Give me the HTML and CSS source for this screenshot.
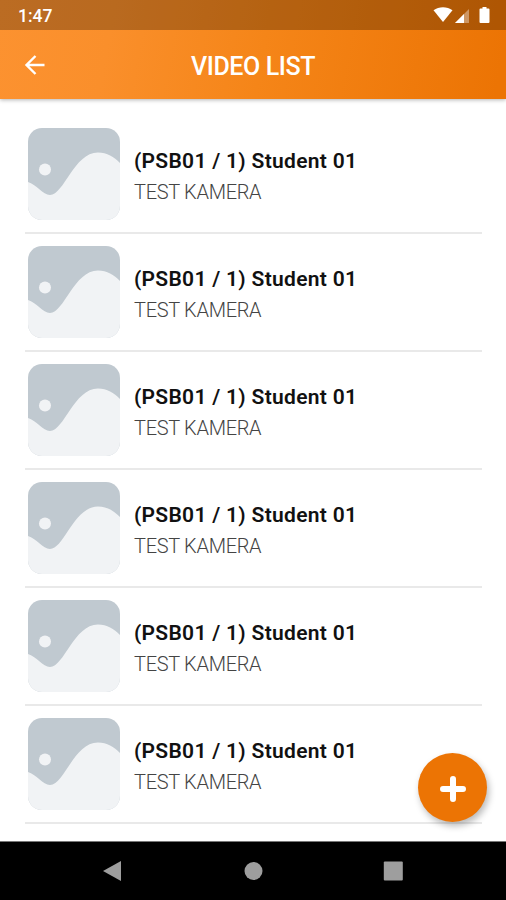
FILE: index.html
```html
<!DOCTYPE html>
<html lang="en">
<head>
<meta charset="utf-8">
<title>Video List</title>
<link rel="stylesheet" href="styles.css">
</head>
<body>
<svg class="defs" width="0" height="0" aria-hidden="true">
  <symbol id="photo" viewBox="0 0 92 92">
    <rect width="92" height="92" fill="#c0c9d0"/>
    <circle cx="17" cy="41.5" r="6" fill="#f1f3f5"/>
    <path d="M0 54C8 56 15 67 22 67C36 67 46 24.500 70 24.500C79 24.500 86 29 92 35V92H0Z" fill="#f1f3f5"/>
  </symbol>
</svg>
<div class="screen">
  <header class="top">
    <div class="status">
      <span class="time">1:47</span>
      <svg class="indicators" width="58" height="20" viewBox="0 0 58 20" fill="#fff">
        <path d="M.5 3.2C6 -.8 14 -.8 19.500 3.200L10 15Z"/>
        <path d="M36 2V16H22Z" opacity=".38"/>
        <path d="M31 7V16H22Z"/>
        <path d="M47.500 1.500H49.500V0H53.500V1.500H55.500Q56.500 1.500 56.500 2.500V15Q56.500 16 55.500 16H47.500Q46.500 16 46.500 15V2.500Q46.500 1.500 47.500 1.500Z"/>
      </svg>
    </div>
    <div class="appbar">
      <svg class="back" width="22" height="22" viewBox="0 0 22 22" fill="none" stroke="#fff" stroke-width="2.400"><path d="M20.500 11H3M11.500 2L2.500 11L11.500 20"/></svg>
      <h1 class="heading">VIDEO LIST</h1>
    </div>
  </header>
  <main class="list">
    <article class="row"><svg class="thumb"><use href="#photo"/></svg><div><h2 class="name">(PSB01 / 1) Student 01</h2><p class="sub">TEST KAMERA</p></div></article>
    <article class="row"><svg class="thumb"><use href="#photo"/></svg><div><h2 class="name">(PSB01 / 1) Student 01</h2><p class="sub">TEST KAMERA</p></div></article>
    <article class="row"><svg class="thumb"><use href="#photo"/></svg><div><h2 class="name">(PSB01 / 1) Student 01</h2><p class="sub">TEST KAMERA</p></div></article>
    <article class="row"><svg class="thumb"><use href="#photo"/></svg><div><h2 class="name">(PSB01 / 1) Student 01</h2><p class="sub">TEST KAMERA</p></div></article>
    <article class="row"><svg class="thumb"><use href="#photo"/></svg><div><h2 class="name">(PSB01 / 1) Student 01</h2><p class="sub">TEST KAMERA</p></div></article>
    <article class="row"><svg class="thumb"><use href="#photo"/></svg><div><h2 class="name">(PSB01 / 1) Student 01</h2><p class="sub">TEST KAMERA</p></div></article>
  </main>
  <button class="fab" aria-label="Add">
    <svg width="28" height="28" viewBox="0 0 28 28" stroke="#fff" stroke-width="6" stroke-linecap="round"><path d="M14 4V24M4 14H24"/></svg>
  </button>
  <nav class="navbar">
    <svg width="20" height="22" viewBox="0 0 20 22" fill="#9e9e9e"><path d="M0 11L18 1V21Z"/></svg>
    <svg width="20" height="22" viewBox="0 0 20 22" fill="#9e9e9e"><circle cx="10.500" cy="11" r="9"/></svg>
    <svg width="20" height="22" viewBox="0 0 20 22" fill="#9e9e9e"><rect x=".8" y="1.500" width="19" height="19" rx="1"/></svg>
  </nav>
</div>
</body>
</html>
```

FILE: styles.css
```css
* { box-sizing: border-box; margin: 0; padding: 0; }
body { background: #fff; font-family: Roboto, sans-serif; }
.defs { position: absolute; }
.screen { position: relative; display: flex; flex-direction: column; height: 900px; overflow: hidden; }
.top {
  height: 99px;
  flex: none;
  background: linear-gradient(100deg, #fc9230 0%, #fa8f2b 22%, #f58518 52%, #ec7404 98%);
  box-shadow: 0 1px 4px rgba(0, 0, 0, .3);
}
.status {
  display: flex;
  justify-content: space-between;
  height: 30px;
  padding: 7px 15px 0 18px;
  background: rgba(0, 0, 0, .26);
}
.time { color: #fff; font-size: 17.500px; font-weight: 500; line-height: 18px; }
.appbar {
  display: grid;
  grid-template-columns: 48px 1fr 48px;
  align-items: center;
  height: 69px;
}
.back { margin-left: 24px; }
.heading { color: #fff; font-size: 25px; font-weight: 500; line-height: 30px; text-align: center; padding-top: 5px; letter-spacing: -.4px; }
.list { flex: 1; padding: 16.500px 24px 0 25px; }
.row {
  display: flex;
  gap: 14px;
  height: 118.100px;
  padding: 12px 0 0 3px;
  border-bottom: 2px solid #e9e9e9;
}
.thumb { width: 92px; height: 92px; border-radius: 14px; flex: none; }
.name { color: #111; font-size: 21px; font-weight: 600; line-height: 28px; margin-top: 19px; letter-spacing: .3px; white-space: nowrap; }
.sub { color: #444; font-size: 20px; font-weight: 300; line-height: 26px; margin-top: 4px; letter-spacing: -.3px; white-space: nowrap; }
.fab {
  position: absolute;
  left: 418px;
  top: 753px;
  display: grid;
  place-items: center;
  width: 69px;
  height: 69px;
  border: 0;
  border-radius: 50%;
  background: #ec7404;
  box-shadow: 2px 4px 7px rgba(0, 0, 0, .28);
}
.fab svg { margin-top: 3px; }
.navbar {
  display: flex;
  justify-content: space-between;
  align-items: center;
  height: 59px;
  padding: 0 103px;
  background: #000;
  border-top: 1px solid #777;
}
```
